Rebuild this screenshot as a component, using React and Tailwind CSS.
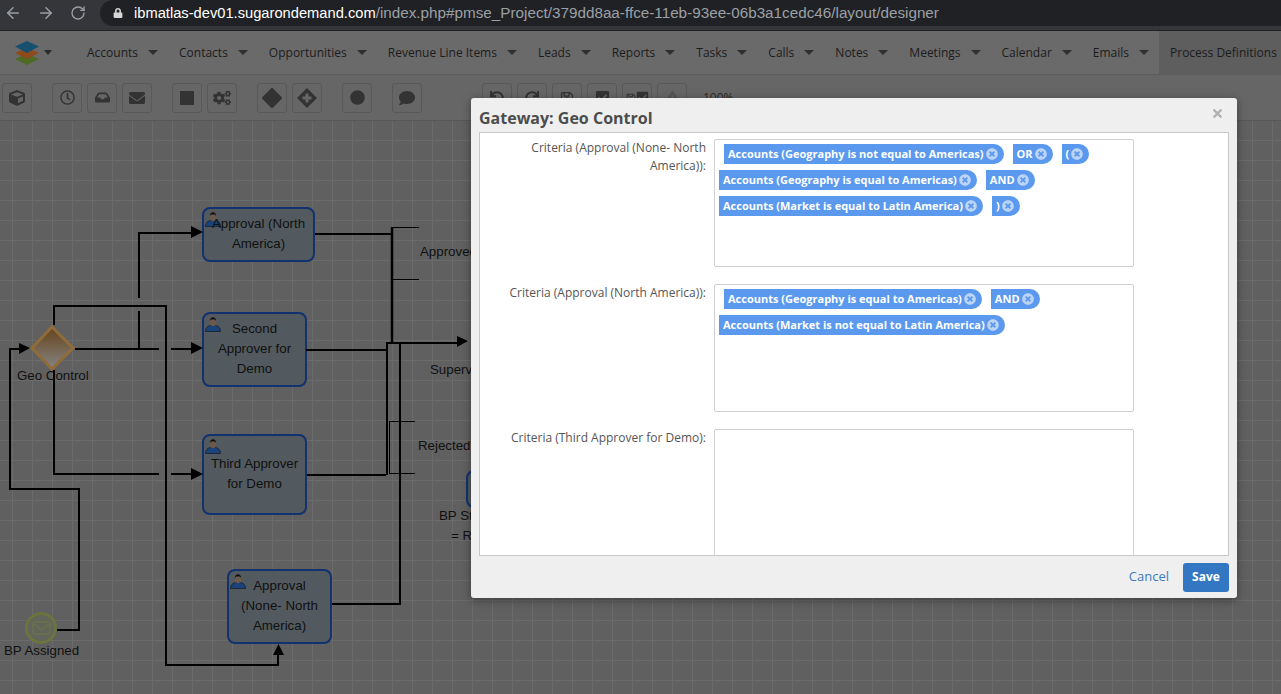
import React from 'react'
import { ArrowLeft, ArrowRight, RotateCw } from 'lucide-react'
import {
  FaLock, FaCube, FaRegClock, FaInbox, FaEnvelope, FaSquareFull, FaCogs, FaCircle, FaComment,
  FaUndo, FaRedo, FaRegSave, FaCheckSquare, FaTimes, FaTimesCircle, FaExclamationTriangle
} from 'react-icons/fa'
import { FaDiamond } from 'react-icons/fa6'

const NAV_ITEMS = ['Accounts', 'Contacts', 'Opportunities', 'Revenue Line Items', 'Leads', 'Reports', 'Tasks', 'Calls', 'Notes', 'Meetings', 'Calendar', 'Emails']

const DiamondPlus = () => (
  <svg width="20" height="20" viewBox="0 0 20 20">
    <path d="M10 0 L20 10 L10 20 L0 10 Z" fill="#333" />
    <path d="M8.5 5.5h3v3h3v3h-3v3h-3v-3h-3v-3h3z" fill="#666" />
  </svg>
)

const SaveCheck = () => (
  <span className="flex items-center">
    <FaRegSave size={10} />
    <FaCheckSquare size={13} />
  </span>
)

function ToolButton({ children, className = '' }) {
  return (
    <div className={`w-[30px] h-[30px] shrink-0 rounded-[3px] border border-[#595959] bg-[#666666] text-[#333333] flex items-center justify-center ${className}`}>
      {children}
    </div>
  )
}

function BrowserBar() {
  return (
    <div className="h-[31px] shrink-0 bg-[#35363a] border-b border-[#222] flex items-start font-['Liberation_Sans',sans-serif]">
      <div className="w-[100px] h-[26px] flex items-center text-[#9aa0a6] pl-[4px] gap-[15px]">
        <ArrowLeft size={18} />
        <ArrowRight size={18} />
        <RotateCw size={16} />
      </div>
      <div className="flex-1 h-[26px] bg-[#202124] rounded-l-[13px] flex items-center pl-[13px] whitespace-nowrap">
        <FaLock size={10} className="text-[#d6d6d6] mr-[11px]" />
        <span className="text-white text-[14.7px]">ibmatlas-dev01.sugarondemand.com</span>
        <span className="text-[#9aa0a6] text-[15.25px]">/index.php#pmse_Project/379dd8aa-ffce-11eb-93ee-06b3a1cedc46/layout/designer</span>
      </div>
    </div>
  )
}

function NavBar() {
  return (
    <div className="h-[44px] shrink-0 bg-[#6a6a6a] border-b border-[#5c5c5c] flex items-center font-['Open_Sans',sans-serif] text-[12px] text-[#1c1c1c] whitespace-nowrap overflow-hidden">
      <svg width="26" height="28" viewBox="0 0 26 28" className="ml-[14px] shrink-0">
        <path d="M13 15 L25 20 L13 26 L1 20 Z" fill="#4f6a22" />
        <path d="M13 9 L25 14 L13 20 L1 14 Z" fill="#8f4a1c" />
        <path d="M13 2 L25 7.5 L13 14 L1 7.5 Z" fill="#17506f" />
      </svg>
      <span className="ml-[4px] mr-[35px] w-0 h-0 border-x-[4px] border-x-transparent border-t-[5px] border-t-[#2a2a2a]" />
      {NAV_ITEMS.map(item => (
        <div key={item} className="flex items-center mr-[21px]">
          {item}
          <span className="ml-[10px] w-0 h-0 border-x-[5px] border-x-transparent border-t-[5px] border-t-[#2f2f2f]" />
        </div>
      ))}
      <div className="h-full flex-1 bg-[#5e5e5e] flex items-center pl-[11px] -ml-[11px]">Process Definitions</div>
    </div>
  )
}

function Toolbar() {
  return (
    <div className="h-[46px] shrink-0 bg-[#666666] border-b border-[#585858] flex items-center pl-[2px] whitespace-nowrap">
      <ToolButton><FaCube size={16} /></ToolButton>
      <ToolButton className="ml-[20px]"><FaRegClock size={15} /></ToolButton>
      <ToolButton className="ml-[5px]"><FaInbox size={15} /></ToolButton>
      <ToolButton className="ml-[5px]"><FaEnvelope size={16} /></ToolButton>
      <ToolButton className="ml-[20px]"><FaSquareFull size={14} /></ToolButton>
      <ToolButton className="ml-[5px]"><FaCogs size={18} /></ToolButton>
      <ToolButton className="ml-[20px]"><FaDiamond size={20} /></ToolButton>
      <ToolButton className="ml-[5px]"><DiamondPlus /></ToolButton>
      <ToolButton className="ml-[20px]"><FaCircle size={15} /></ToolButton>
      <ToolButton className="ml-[20px]"><FaComment size={16} /></ToolButton>
      <ToolButton className="ml-[60px]"><FaUndo size={14} /></ToolButton>
      <ToolButton className="ml-[5px]"><FaRedo size={14} /></ToolButton>
      <ToolButton className="ml-[5px]"><FaRegSave size={14} /></ToolButton>
      <ToolButton className="ml-[5px]"><FaCheckSquare size={15} /></ToolButton>
      <ToolButton className="ml-[5px]"><SaveCheck /></ToolButton>
      <ToolButton className="ml-[5px]"><FaExclamationTriangle size={15} className="text-[#555]" /></ToolButton>
      <span className="ml-[16px] text-[12px] text-[#2b2b2b] font-['Open_Sans',sans-serif]">100%</span>
      <span className="ml-[14px] text-[12px] text-[#2b2b2b]">⌄</span>
    </div>
  )
}

const UserIcon = () => (
  <svg width="16" height="16" viewBox="0 0 16 16" className="absolute left-[1px] top-[2px]">
    <path d="M0.5 15.5 C0.5 11.5 3 10 5.5 9.5 L10.5 9.5 C13 10 15.5 11.5 15.5 15.5 Z" fill="#1a437c" stroke="#111" strokeWidth="0.6" />
    <rect x="5" y="1" width="6" height="9" rx="2.5" fill="#6b5a4c" />
    <path d="M5 5 C4.5 0 11.5 0 11 5 L10 3.5 L6 3.5 Z" fill="#0f0f0f" />
  </svg>
)

function TaskNode({ className, lines, textClass = '' }) {
  return (
    <div className={`absolute rounded-[8px] border-2 border-[#12316f] bg-[#525a5f] text-center text-[13.3px] leading-[20px] text-[#101010] flex flex-col ${className}`}>
      <UserIcon />
      <div className={`relative ${textClass}`}>
        {lines.map(line => <div key={line} className="whitespace-nowrap">{line}</div>)}
      </div>
    </div>
  )
}

function Connectors() {
  const black = { fill: 'none', stroke: '#000', strokeWidth: 2 }
  return (
    <svg width="1281" height="573" viewBox="0 121 1281 573" className="absolute left-0 top-0">
      <defs>
        <linearGradient id="gw" x1="0" y1="0" x2="0" y2="1">
          <stop offset="0" stopColor="#664218" />
          <stop offset="1" stopColor="#858585" />
        </linearGradient>
      </defs>
      <polyline {...black} points="57,630 79,630 79,489 10,489 10,349 20,349" />
      <polyline {...black} points="54,325 54,306 166,306 166,665 278,665 278,654" />
      <polyline {...black} points="75,349 159,349" />
      <polyline {...black} points="171,349 192,349" />
      <polyline {...black} points="139,349 139,311" />
      <polyline {...black} points="139,298 139,233 192,233" />
      <polyline {...black} points="54,370 54,474 159,474" />
      <polyline {...black} points="171,474 192,474" />
      <polyline {...black} points="315,234 392,234" />
      <path d="M392 227 V343" stroke="#000" strokeWidth="2.5" />
      <path d="M392.5 227.5 H419 M392.5 279.5 H419" stroke="#000" strokeWidth="1" />
      <polyline {...black} points="306,350 386,350" />
      <polyline {...black} points="387,475 387,343 458,343" />
      <polyline {...black} points="307,475 386,475" />
      <polyline {...black} points="332,604 400,604 400,343" />
      <path d="M389.5 421.5 H415 M389.5 473.5 H415 M389.5 421 V474" stroke="#000" strokeWidth="1" fill="none" />
      <polygon points="19,343 19,354 30,348" />
      <polygon points="191,226 191,238 203,232" />
      <polygon points="191,342 191,354 203,348" />
      <polygon points="191,468 191,480 203,474" />
      <polygon points="457,336 457,347 468,341" />
      <polygon points="273,655 284,655 278.5,644" />
      <polygon points="52,327 73,348 52,369 32,348" fill="url(#gw)" stroke="#8f6c3a" strokeWidth="3" />
      <circle cx="41" cy="628" r="14.5" fill="#62655a" stroke="#6a7440" strokeWidth="3" />
      <rect x="33" y="622" width="17" height="12" rx="1.5" fill="none" stroke="#6f7a45" strokeWidth="1" />
      <path d="M34 624 L41.5 630 L49 624" fill="none" stroke="#6f7a45" strokeWidth="1" />
    </svg>
  )
}

function Canvas() {
  return (
    <div className="relative flex-1 overflow-hidden bg-[#606060] bg-[linear-gradient(#6b6b6b_1px,transparent_1px),linear-gradient(90deg,#6b6b6b_1px,transparent_1px)] bg-[size:20px_20px] bg-[position:12px_19px] font-['Liberation_Sans',sans-serif] text-[13.3px] leading-[20px] text-[#101010]">
      <TaskNode className="left-[202px] top-[86px] w-[113px] h-[55px]" lines={['Approval (North', 'America)']} textClass="pt-[5px]" />
      <TaskNode className="left-[202px] top-[191px] w-[105px] h-[75px]" lines={['Second', 'Approver for', 'Demo']} textClass="pt-[5px]" />
      <TaskNode className="left-[202px] top-[313px] w-[105px] h-[81px]" lines={['Third Approver', 'for Demo']} textClass="pt-[18px]" />
      <TaskNode className="left-[227px] top-[448px] w-[105px] h-[75px]" lines={['Approval', '(None- North', 'America)']} textClass="pt-[5px]" />
      <div className="absolute left-[466px] top-[349px] w-[40px] h-[38px] rounded-[8px] border-2 border-[#12316f] bg-[#525a5f]" />
      <Connectors />
      <span className="absolute left-[17px] top-[245px] whitespace-nowrap">Geo Control</span>
      <span className="absolute left-[4px] top-[520px] whitespace-nowrap">BP Assigned</span>
      <span className="absolute left-[420px] top-[121px] whitespace-nowrap">Approved</span>
      <span className="absolute left-[430px] top-[239px] whitespace-nowrap">Supervisor</span>
      <span className="absolute left-[418px] top-[315px] whitespace-nowrap">Rejected</span>
      <span className="absolute left-[439px] top-[385px] whitespace-nowrap">BP Status</span>
      <span className="absolute left-[451px] top-[405px] whitespace-nowrap">= Rejected</span>
    </div>
  )
}

function Tag({ label, first }) {
  return (
    <span className={`h-[20px] bg-[#5a99ee] text-white text-[11px] font-bold pl-[4px] pr-[6px] rounded-r-[10px] flex items-center whitespace-nowrap ${first ? 'ml-[5px]' : ''}`}>
      {label}
      <FaTimesCircle size={12} className="text-[#bcd4f6] ml-[2px]" />
    </span>
  )
}

function CriteriaRow({ label, rows }) {
  return (
    <div className="flex items-start shrink-0 mb-[17px]">
      <label className="w-[226px] shrink-0 text-right text-[12px] leading-[18px] text-[#555] pl-[20px]">{label}</label>
      <div className="ml-[8px] w-[420px] h-[128px] shrink-0 bg-white border border-[#d0d0d0] rounded-[2px] pt-[4px] pl-[4px] flex flex-col gap-[6px]">
        {rows.map((row, r) => (
          <div key={r} className="flex gap-[9px]">
            {row.map((tag, t) => <Tag key={tag} label={tag} first={r === 0 && t === 0} />)}
          </div>
        ))}
      </div>
    </div>
  )
}

function GatewayModal() {
  return (
    <div className="absolute left-[471px] top-[98px] w-[766px] h-[500px] bg-[#efefef] rounded-[3px] shadow-[0_2px_8px_rgba(0,0,0,0.4)] flex flex-col font-['Open_Sans',sans-serif]">
      <div className="h-[34px] shrink-0 flex items-center justify-between pl-[8px] pr-[13px]">
        <h3 className="text-[16px] font-bold text-[#4d4d4d] pt-[6px]">Gateway: Geo Control</h3>
        <FaTimes size={13} className="text-[#b2b2b2] -mt-[3px]" />
      </div>
      <div className="mx-[8px] h-[424px] shrink-0 bg-white border border-[#c8c8c8] overflow-hidden pt-[6px]">
        <CriteriaRow
          label="Criteria (Approval (None- North America)):"
          rows={[
            ['Accounts (Geography is not equal to Americas)', 'OR', '('],
            ['Accounts (Geography is equal to Americas)', 'AND'],
            ['Accounts (Market is equal to Latin America)', ')']
          ]}
        />
        <CriteriaRow
          label="Criteria (Approval (North America)):"
          rows={[
            ['Accounts (Geography is equal to Americas)', 'AND'],
            ['Accounts (Market is not equal to Latin America)']
          ]}
        />
        <CriteriaRow label="Criteria (Third Approver for Demo):" rows={[]} />
      </div>
      <div className="flex-1 flex items-center justify-end pr-[8px] gap-[14px]">
        <span className="text-[13px] text-[#3a7bc4]">Cancel</span>
        <button className="w-[46px] h-[29px] bg-[#3377c2] text-white text-[12px] font-bold rounded-[3px]">Save</button>
      </div>
    </div>
  )
}

export default function App() {
  return (
    <div className="relative w-[1281px] h-[694px] overflow-hidden flex flex-col bg-[#606060]">
      <BrowserBar />
      <NavBar />
      <Toolbar />
      <Canvas />
      <GatewayModal />
    </div>
  )
}
